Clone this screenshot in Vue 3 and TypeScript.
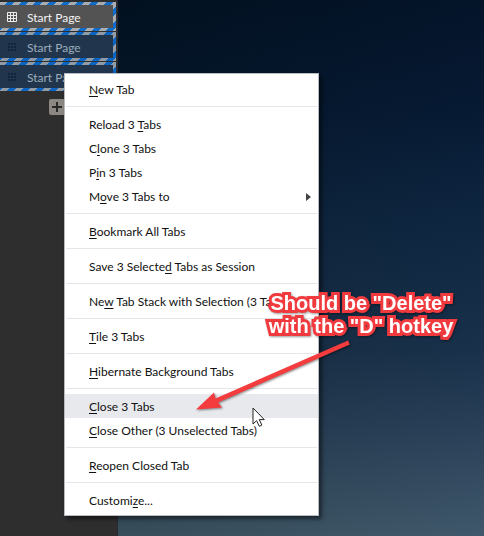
<script setup lang="ts">
interface MenuItem {
  label: string
  // position of the underlined access key within the label
  key: number
  submenu?: boolean
  active?: boolean
}

const tabs = [
  { title: 'Start Page', current: true },
  { title: 'Start Page', current: false },
  { title: 'Start Page', current: false },
]

const groups: MenuItem[][] = [
  [{ label: 'New Tab', key: 0 }],
  [
    { label: 'Reload 3 Tabs', key: 9 },
    { label: 'Clone 3 Tabs', key: 1 },
    { label: 'Pin 3 Tabs', key: 1 },
    { label: 'Move 3 Tabs to', key: 1, submenu: true },
  ],
  [{ label: 'Bookmark All Tabs', key: 0 }],
  [{ label: 'Save 3 Selected Tabs as Session', key: 14 }],
  [{ label: 'New Tab Stack with Selection (3 Tabs)', key: 2 }],
  [{ label: 'Tile 3 Tabs', key: 0 }],
  [{ label: 'Hibernate Background Tabs', key: 0 }],
  [
    { label: 'Close 3 Tabs', key: 0, active: true },
    { label: 'Close Other (3 Unselected Tabs)', key: 0 },
  ],
  [{ label: 'Reopen Closed Tab', key: 0 }],
  [{ label: 'Customize...', key: 7 }],
]

const cells = [0, 1, 2, 3, 4, 5, 6, 7, 8]
</script>

<template>
  <div class="window">
    <aside class="sidebar">
      <div class="tabs" role="tablist">
        <button
          v-for="(tab, i) in tabs"
          :key="i"
          class="tab"
          :class="{ current: tab.current }"
          type="button"
          role="tab"
          :aria-selected="tab.current"
        >
          <span class="tab-body">
            <svg class="grid-icon" width="10" height="10" viewBox="0 0 10 10" aria-hidden="true">
              <path v-if="tab.current" d="M.5 .5h9v9h-9zM3.5 0v10M6.5 0v10M0 3.5h10M0 6.5h10" />
              <template v-else>
                <rect
                  v-for="c in cells"
                  :key="c"
                  :x="1 + (c % 3) * 3"
                  :y="1 + Math.floor(c / 3) * 3"
                  width="2"
                  height="2"
                />
              </template>
            </svg>
            <span>{{ tab.title }}</span>
          </span>
        </button>
      </div>
      <button class="add" type="button" aria-label="New Tab">
        <svg width="16" height="16" viewBox="0 0 16 16" aria-hidden="true">
          <path d="M8 3v10M3 8h10" />
        </svg>
      </button>
    </aside>
    <main class="wallpaper"></main>

    <div class="menu" role="menu">
      <div v-for="(group, g) in groups" :key="g" class="group" role="group">
        <button
          v-for="item in group"
          :key="item.label"
          class="item"
          :class="{ active: item.active }"
          type="button"
          role="menuitem"
        >
          <span>{{ item.label.slice(0, item.key) }}<u>{{ item.label[item.key] }}</u>{{ item.label.slice(item.key + 1) }}</span>
          <svg v-if="item.submenu" width="5" height="8" viewBox="0 0 5 8" aria-hidden="true">
            <path d="M0 0L5 4L0 8z" />
          </svg>
        </button>
      </div>
    </div>

    <p class="note">Should be "Delete"<br />with the "D" hotkey</p>
    <svg class="arrow" width="160" height="76" viewBox="0 0 160 76" aria-hidden="true">
      <path d="M157 3.400L158.800 7.400L27 65.500L31 70.500L5 72.500L23 55.500L24.500 61.500z" />
    </svg>
    <svg class="cursor" width="14" height="21" viewBox="0 0 14 21" aria-hidden="true">
      <path d="M1 1V17L4.600 13.700L7.300 19.300L9.800 18.100L7.300 12.600H12.300z" />
    </svg>
  </div>
</template>

<style>
body {
  margin: 0;
}
</style>

<style scoped>
.window {
  position: relative;
  display: flex;
  min-height: 100vh;
  overflow: hidden;
  font-family: Lato, 'Open Sans', sans-serif;
  font-size: 12px;
}

button {
  margin: 0;
  padding: 0;
  border: 0;
  font: inherit;
  text-align: left;
}

.sidebar {
  box-sizing: border-box;
  width: 118px;
  flex: none;
  display: flex;
  flex-direction: column;
  align-items: center;
  gap: 8px;
  padding-top: 2px;
  background: #2e2e2e;
  border-right: 1px solid #252b30;
}

.tabs {
  align-self: stretch;
  display: flex;
  flex-direction: column;
  gap: 1px;
  padding-right: 1px;
}

.tab {
  height: 29px;
  padding: 3px 3px 3px 0;
  background: repeating-linear-gradient(135deg, #919ba6 0 5px, #0a66c2 5px 10px);
  color: #9dadbc;
}

.tab.current {
  background: repeating-linear-gradient(135deg, #a9adb1 0 5px, #0f6cc9 5px 10px);
  color: #f4f4f4;
}

.tab-body {
  box-sizing: border-box;
  height: 100%;
  display: flex;
  align-items: center;
  gap: 10px;
  padding: 1px 0 0 7px;
  background: #21364d;
}

.current .tab-body {
  background: #535353;
}

.grid-icon {
  fill: #10243a;
}

.current .grid-icon {
  fill: none;
  stroke: #ececec;
}

.add {
  width: 16px;
  height: 16px;
  margin-right: 3px;
  border-radius: 2px;
  background: #8b8782;
}

.add svg {
  display: block;
  stroke: #292929;
  stroke-width: 2;
}

.wallpaper {
  flex: 1;
  background:
    linear-gradient(90deg, rgba(0, 12, 20, 0.25), rgba(10, 30, 75, 0.16)),
    linear-gradient(#031223 0%, #06192f 20%, #102840 42%, #1c344b 65%, #2f465b 80%, #4a6371 100%);
}

.menu {
  position: absolute;
  left: 64px;
  top: 73px;
  box-sizing: border-box;
  width: 255px;
  padding: 3px 0;
  background: #fff;
  border: 1px solid #b8bcc0;
  box-shadow: 3px 3px 4px rgba(0, 0, 0, 0.5);
}

.group + .group::before {
  content: '';
  display: block;
  height: 1px;
  margin: 5px 1px;
  background: #e5e6e9;
}

.item {
  display: flex;
  align-items: center;
  justify-content: space-between;
  width: 100%;
  height: 24px;
  padding: 1px 7px 0 24px;
  background: none;
  color: #111;
  white-space: nowrap;
}

.item.active {
  background: #e8e9ed;
}

.item u {
  text-decoration-thickness: 1px;
  text-underline-offset: 2px;
  text-decoration-skip-ink: none;
}

.item svg {
  fill: #444;
}

.note {
  position: absolute;
  left: 261px;
  top: 292px;
  width: 200px;
  margin: 0;
  font: bold 20px/23px 'Liberation Sans', Arial, sans-serif;
  text-align: center;
  white-space: nowrap;
  color: #fff;
  -webkit-text-stroke: 6px #f03a3e;
  paint-order: stroke fill;
  stroke-linejoin: round;
  filter: drop-shadow(1px 1px 1px rgba(0, 0, 0, 0.4));
}

.arrow {
  position: absolute;
  left: 191px;
  top: 337px;
  fill: #f43b3d;
  filter: drop-shadow(1px 1px 1px rgba(0, 0, 0, 0.45));
}

.cursor {
  position: absolute;
  left: 252px;
  top: 407px;
  fill: #fff;
  stroke: #222;
}
</style>
